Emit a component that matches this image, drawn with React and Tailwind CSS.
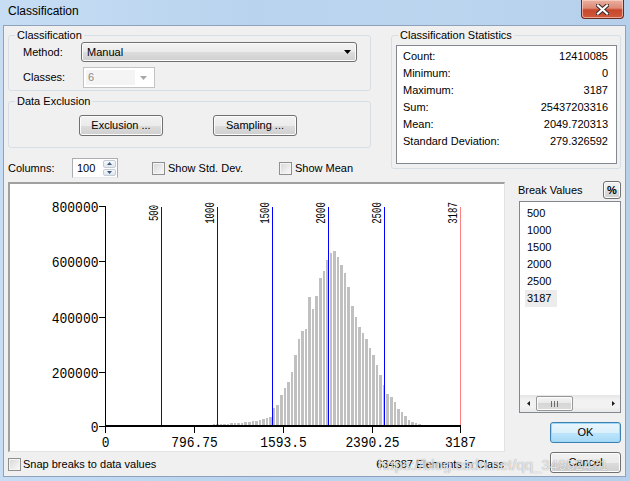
import React from "react";

const H = [
  0,0,0,0,0,0,0,0,0,0,
  0,0,0,0,0,0,0,0,0,0,
  0,0,0,0,0,1,1,1,1,1,
  2,2,2,2,2,3,3,3,3,4,
  4,5,5,6,7,8,9,18,21,31,
  38,44,54,71,87,95,97,129,117,130,
  148,155,166,173,175,169,161,153,139,120,
  109,99,93,87,78,71,61,51,41,32,
  29,24,17,14,10,6,4,3,2,1,
  1,0,0,0,0,0,0,0,0,0,
];

const BREAKS = [
  { v: "500", x: 161, c: "#0000ff" },
  { v: "1000", x: 217, c: "#0000ff" },
  { v: "1500", x: 272, c: "#0000ff" },
  { v: "2000", x: 328, c: "#0000ff" },
  { v: "2500", x: 384, c: "#0000ff" },
  { v: "3187", x: 460, c: "#ff8080" },
];

const YT = [
  { t: "800000", y: 206 },
  { t: "600000", y: 261 },
  { t: "400000", y: 317 },
  { t: "200000", y: 372 },
  { t: "0", y: 426 },
];

const XT = [
  { t: "0", x: 105 },
  { t: "796.75", x: 194 },
  { t: "1593.5", x: 283 },
  { t: "2390.25", x: 372 },
  { t: "3187", x: 460 },
];

function Chart() {
  const bars = [];
  for (let i = 0; i < 100; i++) {
    const h = H[i];
    if (!h) continue;
    const x0 = 105 + Math.round(i * 3.55) + 1;
    const x1 = 105 + Math.round((i + 1) * 3.55);
    bars.push(
      <rect key={i} x={x0} y={426 - h} width={Math.max(1, x1 - x0)} height={h} fill="#c0c0c0" />
    );
  }
  const mono = "Liberation Mono, monospace";
  return (
    <svg width="494" height="267" viewBox="10 184 494 267" className="block">
      {bars}
      {BREAKS.map((b) => (
        <g key={b.v}>
          <rect x={b.x} y={207} width={1} height={219} fill={b.c} />
          <rect x={b.x} y={425} width={1} height={1} fill="#ffff00" />
          <text
            transform={`translate(${b.x - 3} 213) rotate(-90)`}
            textAnchor="middle"
            fontFamily={mono}
            fontSize="12"
            textLength={b.v.length * 5.4}
            lengthAdjust="spacingAndGlyphs"
            fill="#000"
          >
            {b.v}
          </text>
        </g>
      ))}
      <rect x={105} y={206} width={1} height={222} fill="#000" />
      <rect x={105} y={425} width={356} height={2} fill="#000" />
      {YT.map((t) => (
        <g key={t.t}>
          <rect x={99} y={t.y} width={6} height={1} fill="#000" />
          <text
            x={98.5}
            y={t.y + 6}
            textAnchor="end"
            fontFamily={mono}
            fontSize="15"
            textLength={t.t.length * 7.8}
            lengthAdjust="spacingAndGlyphs"
            fill="#000"
          >
            {t.t}
          </text>
        </g>
      ))}
      {XT.map((t) => (
        <g key={t.t}>
          <rect x={t.x} y={427} width={1} height={6} fill="#000" />
          <text
            x={t.x + 0.5}
            y={447}
            textAnchor="middle"
            fontFamily={mono}
            fontSize="15"
            textLength={t.t.length * 7.75}
            lengthAdjust="spacingAndGlyphs"
            fill="#000"
          >
            {t.t}
          </text>
        </g>
      ))}
    </svg>
  );
}

function Btn({ children, className = "" }) {
  return (
    <div
      className={`flex items-center justify-center rounded-[3px] border border-[#707070] bg-[linear-gradient(#f2f2f2_0%,#ebebeb_50%,#dddddd_50%,#cfcfcf_100%)] shadow-[inset_0_0_0_1px_#fcfcfc] ${className}`}
    >
      {children}
    </div>
  );
}

function Check() {
  return (
    <span className="block w-[13px] h-[13px] shrink-0 border border-[#8e8f8f] bg-[linear-gradient(135deg,#d6d6d6,#fbfbfb)] shadow-[inset_0_0_0_1px_#f4f4f4]" />
  );
}

function Group({ label, className = "", children }) {
  return (
    <div className={`relative border border-[#d5dfe5] rounded-[3px] ${className}`}>
      <span className="absolute left-[6px] top-[-7px] px-[2px] bg-[#f0f0f0] leading-[13px] whitespace-nowrap">
        {label}
      </span>
      {children}
    </div>
  );
}

function DownArrow({ color = "#000" }) {
  return (
    <svg width="7" height="4" viewBox="0 0 7 4" className="block">
      <path d="M0 0H7L3.5 4Z" fill={color} />
    </svg>
  );
}

function CloseX() {
  return (
    <svg width="13" height="11" viewBox="0 0 13 11" className="block">
      <path d="M2 1.5L11 9.5M11 1.5L2 9.5" stroke="#3a2a2a" strokeWidth="4.2" strokeLinecap="square" />
      <path d="M2 1.5L11 9.5M11 1.5L2 9.5" stroke="#ffffff" strokeWidth="2.2" strokeLinecap="square" />
    </svg>
  );
}

const STATS = [
  ["Count:", "12410085"],
  ["Minimum:", "0"],
  ["Maximum:", "3187"],
  ["Sum:", "25437203316"],
  ["Mean:", "2049.720313"],
  ["Standard Deviation:", "279.326592"],
];

const VALUES = ["500", "1000", "1500", "2000", "2500", "3187"];

export default function App() {
  return (
    <div className="w-[630px] h-[481px] relative overflow-hidden flex flex-col bg-[linear-gradient(90deg,#c6ddf4,#b9d3ee_40%,#bcd5ef_70%,#b6cfea)] font-['Liberation_Sans',sans-serif] text-[11px] leading-none text-black select-none">
      {/* Title bar */}
      <div className="h-[25px] shrink-0 flex items-start">
        <span className="ml-[8px] mt-[4px] text-[12px] leading-[14px] text-black">Classification</span>
        <div className="ml-auto mr-[6px] w-[43px] h-[19px] rounded-b-[4px] border border-t-0 border-[#6a2a20] bg-[linear-gradient(#eab0a2_0%,#dd8a74_45%,#c8472c_55%,#cf5a3a_100%)] shadow-[inset_0_0_0_1px_rgba(255,220,210,0.6)] flex items-center justify-center">
          <CloseX />
        </div>
      </div>

      {/* Body */}
      <div className="ml-[3px] w-[623px] h-[452px] shrink-0 border border-[#8ea3bb] bg-[#f0f0f0] flex flex-col">
        {/* Top section */}
        <div className="flex pl-[4px]">
          <div className="w-[363px] mt-[9px] flex flex-col">
            <Group label="Classification" className="h-[56px] pt-[6px]">
              <div className="flex items-center h-[20px] pl-[14px]">
                <span className="w-[58px]">Method:</span>
                <div className="w-[276px] h-[20px] rounded-[3px] border border-[#707070] bg-[linear-gradient(#f2f2f2_0%,#ebebeb_50%,#dddddd_50%,#cfcfcf_100%)] shadow-[inset_0_0_0_1px_#fcfcfc] flex items-center pl-[5px] pr-[5px]">
                  <span className="flex-1">Manual</span>
                  <DownArrow />
                </div>
              </div>
              <div className="flex items-center h-[21px] mt-[5px] pl-[14px]">
                <span className="w-[60px]">Classes:</span>
                <div className="w-[72px] h-[21px] border border-[#c3c3c3] bg-white flex items-center p-[2px]">
                  <span className="w-[49px] h-full bg-[#f4f4f4] flex items-center pl-[2px] text-[#8a8a8a]">6</span>
                  <span className="flex-1 flex justify-center">
                    <DownArrow color="#a8a8a8" />
                  </span>
                </div>
              </div>
            </Group>

            <Group label="Data Exclusion" className="mt-[10px] h-[47px] pt-[13px]">
              <div className="flex pl-[70px]">
                <Btn className="w-[84px] h-[21px]">Exclusion ...</Btn>
                <Btn className="w-[84px] h-[21px] ml-[50px]">Sampling ...</Btn>
              </div>
            </Group>

            <div className="mt-[10px] h-[20px] flex items-center">
              <span className="w-[64px]">Columns:</span>
              <div className="w-[46px] h-[20px] border border-[#abadb3] border-b-[#e3e9ef] bg-white flex">
                <span className="flex-1 pl-[4px] flex items-center">100</span>
                <div className="w-[15px] flex flex-col gap-[1px] p-[1px]">
                  <div className="flex-1 rounded-[2px] border border-[#c5cdd8] bg-[linear-gradient(#f6f8fb,#dfe6ee)] flex items-center justify-center">
                    <svg width="5" height="3" viewBox="0 0 5 3" className="block">
                      <path d="M0 3H5L2.5 0Z" fill="#42597a" />
                    </svg>
                  </div>
                  <div className="flex-1 rounded-[2px] border border-[#c5cdd8] bg-[linear-gradient(#f6f8fb,#dfe6ee)] flex items-center justify-center">
                    <svg width="5" height="3" viewBox="0 0 5 3" className="block">
                      <path d="M0 0H5L2.5 3Z" fill="#42597a" />
                    </svg>
                  </div>
                </div>
              </div>
              <div className="ml-[34px] w-[127px] flex items-center gap-[3px]">
                <Check />
                <span>Show Std. Dev.</span>
              </div>
              <div className="flex items-center gap-[3px]">
                <Check />
                <span>Show Mean</span>
              </div>
            </div>
          </div>

          <Group label="Classification Statistics" className="ml-[20px] mt-[9px] w-[230px] h-[134px] pt-[9px] pl-[4px]">
            <div className="w-[221px] h-[119px] border border-[#828790] bg-white pt-[2px] pl-[6px] pr-[8px]">
              {STATS.map(([k, v]) => (
                <div key={k} className="flex justify-between h-[17px] items-center">
                  <span>{k}</span>
                  <span>{v}</span>
                </div>
              ))}
            </div>
          </Group>
        </div>

        {/* Main row */}
        <div className="flex mt-[3px] pl-[4px]">
          <div className="w-[497px] flex flex-col">
            <div className="mt-[1px] h-[270px] border-t-2 border-l-2 border-t-[#a0a0a0] border-l-[#a0a0a0] border-r border-b border-r-[#e3e3e3] border-b-[#e3e3e3] bg-white">
              <Chart />
            </div>
            <div className="h-[24px] flex items-center">
              <Check />
              <span className="ml-[2px]">Snap breaks to data values</span>
              <span className="ml-auto mr-[1px]">634387 Elements in Class</span>
            </div>
          </div>

          <div className="ml-[13px] w-[103px] flex flex-col">
            <div className="h-[18px] flex items-center">
              <span className="flex-1">Break Values</span>
              <Btn className="w-[18px] h-[18px] text-[11px] font-bold">%</Btn>
            </div>
            <div className="mt-[2px] ml-[1px] h-[212px] border border-[#828790] bg-white flex flex-col">
              <div className="flex-1 pt-[3px] pl-[5px]">
                {VALUES.map((v) => (
                  <div key={v} className="h-[17px] flex items-center">
                    <span className={`px-[2px] h-[17px] flex items-center ${v === "3187" ? "w-[32px] bg-[#ececec]" : ""}`}>{v}</span>
                  </div>
                ))}
              </div>
              <div className="h-[17px] bg-[linear-gradient(#e6e6e6,#f2f2f2_30%,#f2f2f2_70%,#e8e8e8)] flex items-center">
                <div className="w-[16px] flex justify-center">
                  <svg width="3" height="5" viewBox="0 0 3 5" className="block">
                    <path d="M3 0V5L0 2.5Z" fill="#1a1a1a" />
                  </svg>
                </div>
                <div className="w-[37px] h-[15px] rounded-[2px] border border-[#979797] bg-[linear-gradient(#f4f4f4,#e8e8e8_50%,#d6d6d6_50%,#dcdcdc)] shadow-[inset_0_0_0_1px_#fbfbfb] flex items-center justify-center gap-[2px]">
                  <span className="w-[1px] h-[6px] bg-[#6d6d6d]" />
                  <span className="w-[1px] h-[6px] bg-[#6d6d6d]" />
                  <span className="w-[1px] h-[6px] bg-[#6d6d6d]" />
                </div>
                <div className="flex-1" />
                <div className="w-[14px] flex justify-center">
                  <svg width="3" height="5" viewBox="0 0 3 5" className="block">
                    <path d="M0 0V5L3 2.5Z" fill="#1a1a1a" />
                  </svg>
                </div>
              </div>
            </div>
            <div className="mt-[9px] self-end w-[71px] h-[21px] rounded-[3px] border border-[#3c7fb1] bg-[linear-gradient(#eaf6fd_0%,#d9f0fc_50%,#bee6fd_50%,#a7d9f5_100%)] shadow-[inset_0_0_0_1px_#9ed8f6] flex items-center justify-center">
              OK
            </div>
            <Btn className="mt-[9px] self-end w-[71px] h-[21px]">Cancel</Btn>
          </div>
        </div>
      </div>

      {/* watermark */}
      <span className="absolute left-[378px] top-[457px] text-[15px] leading-[16px] text-[rgba(255,255,255,0.75)] [text-shadow:0_0_1px_rgba(90,90,90,0.7)] whitespace-nowrap pointer-events-none">
        https://blog.csdn.net/qq_34952471
      </span>
    </div>
  );
}
